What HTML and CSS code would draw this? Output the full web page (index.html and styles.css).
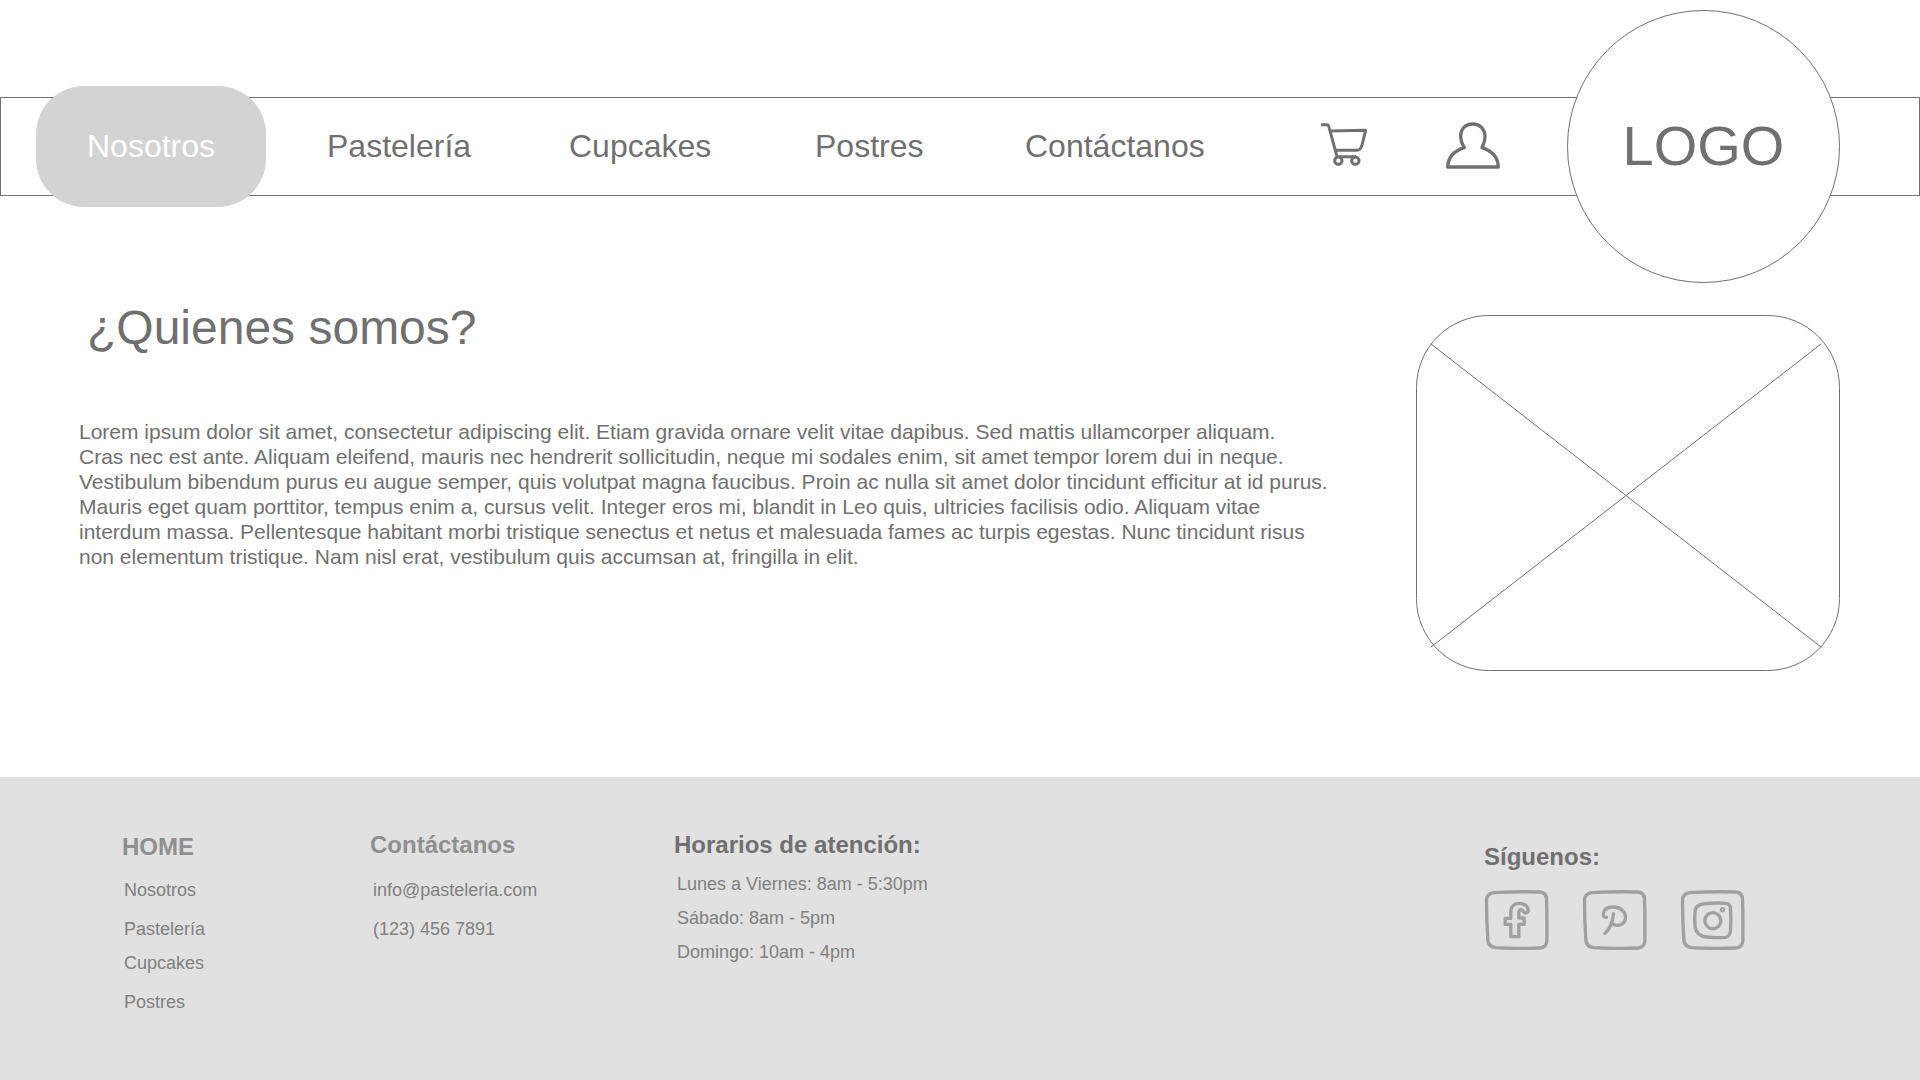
FILE: index.html
```html
<!DOCTYPE html>
<html lang="es">
<head>
<meta charset="utf-8">
<meta name="viewport" content="width=device-width, initial-scale=1">
<title>Pastelería - Nosotros</title>
<link rel="stylesheet" href="styles.css">
</head>
<body>
<header class="header">
  <nav class="bar" aria-label="Principal">
    <a class="pill" href="#nosotros" aria-current="page">Nosotros</a>
    <div class="menu">
      <a href="#pasteleria">Pastelería</a>
      <a href="#cupcakes">Cupcakes</a>
      <a href="#postres">Postres</a>
      <a href="#contactanos">Contáctanos</a>
      <a class="menu-icon" href="#carrito" aria-label="Carrito">
        <svg class="icon-cart" viewBox="63 65 138 129" aria-hidden="true">
          <path d="M66 70H81Q85 70 86 74L110 162Q111 166 114 166H167M90 89L196 87Q197 88 196 92L186 131Q182 147 170 147H108"/>
          <circle cx="115" cy="178" r="11"/><circle cx="166" cy="178" r="11"/>
        </svg>
      </a>
      <a class="menu-icon" href="#cuenta" aria-label="Cuenta">
        <svg class="icon-user" viewBox="438 65 162 141" aria-hidden="true">
          <path d="M443 200C444 167 465 151 493 142C489 133 482 126 482 109C482 86 496 71 518 71S555 86 555 109C555 126 549 133 546 142C574 151 594 169 595 200H443Z"/>
        </svg>
      </a>
    </div>
    <a class="logo" href="#inicio">LOGO</a>
  </nav>
</header>

<main class="main">
  <section class="about">
    <h1>¿Quienes somos?</h1>
    <p>Lorem ipsum dolor sit amet, consectetur adipiscing elit. Etiam gravida ornare velit vitae dapibus. Sed mattis ullamcorper aliquam.<br>
    Cras nec est ante. Aliquam eleifend, mauris nec hendrerit sollicitudin, neque mi sodales enim, sit amet tempor lorem dui in neque.<br>
    Vestibulum bibendum purus eu augue semper, quis volutpat magna faucibus. Proin ac nulla sit amet dolor tincidunt efficitur at id purus.<br>
    Mauris eget quam porttitor, tempus enim a, cursus velit. Integer eros mi, blandit in Leo quis, ultricies facilisis odio. Aliquam vitae<br>
    interdum massa. Pellentesque habitant morbi tristique senectus et netus et malesuada fames ac turpis egestas. Nunc tincidunt risus<br>
    non elementum tristique. Nam nisl erat, vestibulum quis accumsan at, fringilla in elit.</p>
  </section>
  <svg class="photo" viewBox="0 0 424 356" role="img" aria-label="Imagen">
    <rect x=".5" y=".5" width="423" height="355" rx="72"/>
    <path d="M15 29L405 332M405 29L15 332"/>
  </svg>
</main>

<footer class="footer">
  <section class="col col-home">
    <h2>HOME</h2>
    <ul>
      <li><a href="#nosotros">Nosotros</a></li>
      <li><a href="#pasteleria">Pastelería</a></li>
      <li><a href="#cupcakes">Cupcakes</a></li>
      <li><a href="#postres">Postres</a></li>
    </ul>
  </section>
  <section class="col col-contact">
    <h2>Contáctanos</h2>
    <ul>
      <li><a href="mailto:info@pasteleria.com">info@pasteleria.com</a></li>
      <li><a href="tel:1234567891">(123) 456 7891</a></li>
    </ul>
  </section>
  <section class="col col-hours">
    <h2>Horarios de atención:</h2>
    <ul>
      <li>Lunes a Viernes: 8am - 5:30pm</li>
      <li>Sábado: 8am - 5pm</li>
      <li>Domingo: 10am - 4pm</li>
    </ul>
  </section>
  <section class="col col-social">
    <h2>Síguenos:</h2>
    <div class="social">
      <a href="#facebook" aria-label="Facebook">
        <svg viewBox="43 180 194 180" aria-hidden="true">
          <path d="M72 188Q140 184 210 186Q230 188 230 208Q232 265 231 332Q230 353 210 354Q140 357 78 353Q56 351 54 330Q50 270 50 211Q50 191 72 188Z"/>
          <path d="M123 320V283H106V265H123V245C123 228 134 220 149 220C165 220 175 231 175 240C175 246 171 249 167 249C161 249 160 239 153 239C147 239 147 244 147 250V264H163V283H147V320Z"/>
        </svg>
      </a>
      <a href="#pinterest" aria-label="Pinterest">
        <svg viewBox="43 180 194 180" aria-hidden="true">
          <path d="M72 188Q140 184 210 186Q230 188 230 208Q232 265 231 332Q230 353 210 354Q140 357 78 353Q56 351 54 330Q50 270 50 211Q50 191 72 188Z"/>
          <path d="M137 251C134 276 126 299 111 310M116 262C107 263 106 256 107 249C109 238 119 231 135 231C158 231 173 244 173 262C173 278 160 287 146 286C139 286 135 284 132 280"/>
        </svg>
      </a>
      <a href="#instagram" aria-label="Instagram">
        <svg viewBox="43 180 194 180" aria-hidden="true">
          <path d="M72 188Q140 184 210 186Q230 188 230 208Q232 265 231 332Q230 353 210 354Q140 357 78 353Q56 351 54 330Q50 270 50 211Q50 191 72 188Z"/>
          <path d="M112 222C135 219 160 218 180 220Q193 221 194 234Q196 269 194 302Q192 320 179 322Q150 324 124 321Q92 319 88 291Q85 265 88 241Q91 225 112 222Z"/>
          <circle cx="141" cy="272" r="24"/><circle cx="170" cy="239" r="3"/>
        </svg>
      </a>
    </div>
  </section>
</footer>
</body>
</html>
```
FILE: styles.css
```css
* { box-sizing: border-box; }

body {
  margin: 0;
  min-height: 100vh;
  display: flex;
  flex-direction: column;
  background: #fff;
  color: #707070;
  font-family: "Liberation Sans", Arial, sans-serif;
}

a { color: inherit; text-decoration: none; }
h1, h2, p, ul { margin: 0; padding: 0; }
ul { list-style: none; }
svg { display: block; fill: none; stroke: currentColor; stroke-linecap: round; stroke-linejoin: round; }

/* Header: the pill and the logo are taller than the bar and spill over it */
.header { padding-top: 97px; }

.bar {
  display: flex;
  align-items: center;
  height: 99px;
  padding: 0 79px 0 35px;
  border: 1px solid #707070;
  font-size: 32px;
  line-height: 36px;
}

.pill {
  flex: none;
  display: flex;
  align-items: center;
  justify-content: center;
  width: 230px;
  height: 121px;
  padding-bottom: 2px;
  border-radius: 48px;
  background: #d3d3d3;
  color: #fff;
}

.menu {
  flex: 1;
  display: grid;
  grid-template-columns: 242fr 246fr 210fr 296fr 125fr 121fr;
  align-items: center;
  padding: 0 0 2px 61px;
}

.menu-icon { padding-bottom: 1px; }
.icon-cart { width: 46px; height: 43px; margin-bottom: 2px; stroke-width: 9; }
.icon-user { width: 54px; height: 47px; stroke-width: 10; }

.logo {
  flex: none;
  display: flex;
  align-items: center;
  justify-content: center;
  width: 273px;
  height: 273px;
  padding-bottom: 2px;
  border: 1px solid #707070;
  border-radius: 50%;
  background: #fff;
  font-size: 56px;
}

/* Main */
.main {
  flex: 1;
  display: flex;
  justify-content: space-between;
  align-items: flex-start;
  padding: 104px 80px 0 79px;
}

.about h1 {
  padding-left: 8px;
  font-size: 48px;
  line-height: 56px;
  font-weight: 400;
}

.about p {
  margin-top: 63px;
  font-size: 21px;
  line-height: 25px;
}

.photo {
  flex: none;
  width: 424px;
  height: 356px;
  margin-top: 15px;
}

/* Footer */
.footer {
  display: grid;
  grid-template-columns: 248fr 304fr 810fr 436fr;
  min-height: 303px;
  padding: 54px 0 48px 122px;
  background: #e1e1e1;
  font-size: 18px;
  line-height: 22px;
  color: #808080;
}

.col h2 { font-size: 24px; line-height: 28px; color: #707070; }
.col ul { display: flex; flex-direction: column; padding-left: 3px; }

.col-home { padding-top: 2px; }
.col-home ul { gap: 12px; margin-top: 18px; padding-left: 2px; }
.col-home li:nth-child(even) { padding-top: 5px; }
.col-contact ul { gap: 17px; margin-top: 20px; }
.col-home h2, .col-contact h2 { color: #8f8f8f; }
.col-hours ul { gap: 12px; margin-top: 14px; }

.col-social { padding-top: 12px; }
.social { display: flex; gap: 33px; margin-top: 19px; color: #a0a0a0; }
.social svg { width: 65px; height: 60px; stroke-width: 10; }
```
